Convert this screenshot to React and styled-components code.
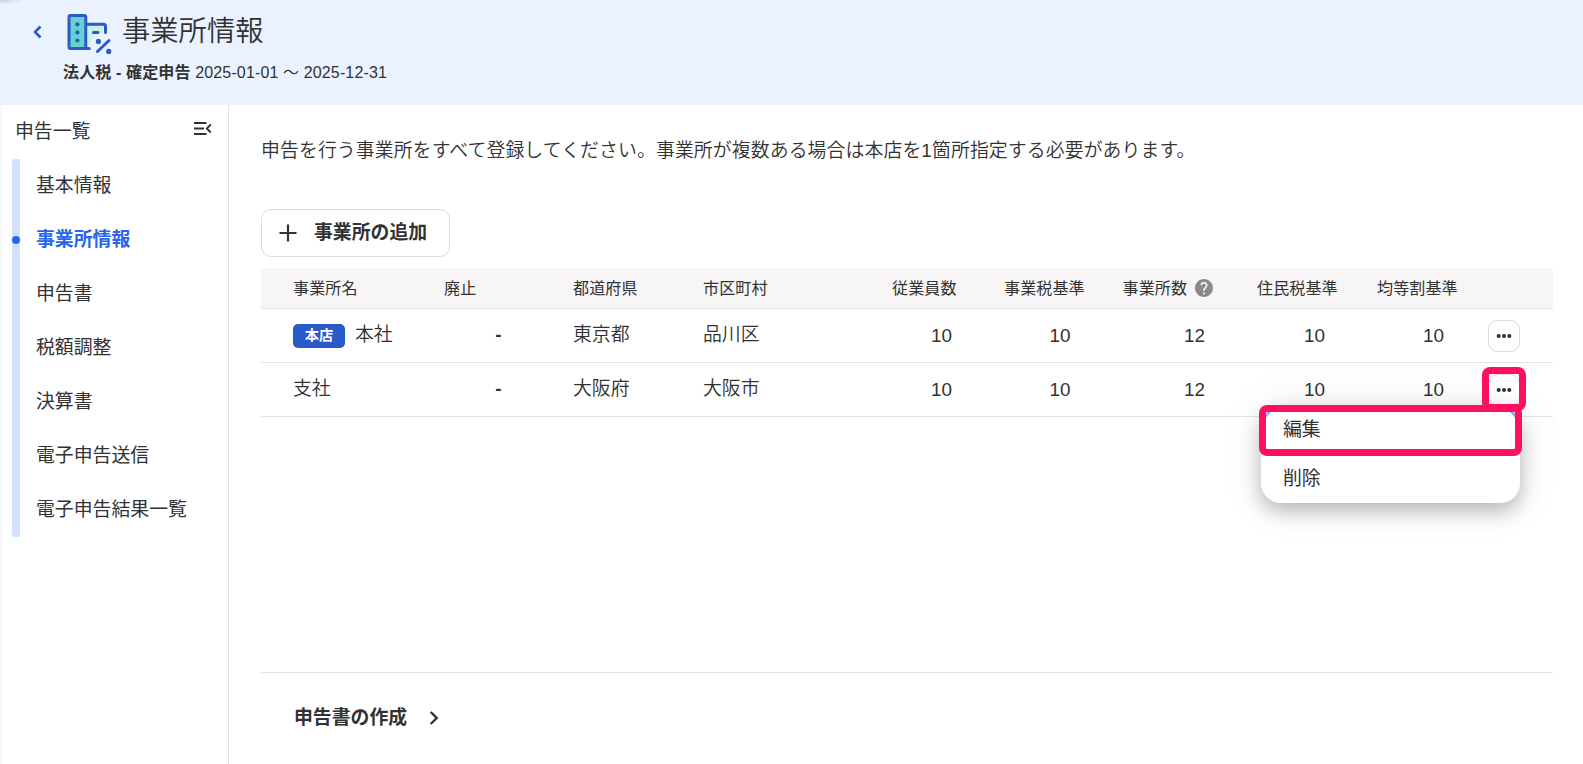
import React from 'react'
import styled, { createGlobalStyle } from 'styled-components'

const navItems = [
  '基本情報',
  '事業所情報',
  '申告書',
  '税額調整',
  '決算書',
  '電子申告送信',
  '電子申告結果一覧',
]

const offices = [
  { name: '本社', main: true, pref: '東京都', city: '品川区', counts: [10, 10, 12, 10, 10] },
  { name: '支社', main: false, pref: '大阪府', city: '大阪市', counts: [10, 10, 12, 10, 10] },
]

const LogoIcon = () => (
  <svg width="46" height="42" viewBox="0 0 46 42" fill="none">
    <path d="M21 12h15v8h-9l-5 12h-1z" fill="#c9f0ee" />
    <rect x="2" y="2.5" width="16.8" height="33" rx="1.8" fill="#66d1cf" stroke="#285ac8" strokeWidth="3" />
    <path d="M20 11.2h16.5a2 2 0 0 1 2 2v6.3M17 35.5h5.3M26.5 19.4h4.5" stroke="#285ac8" strokeWidth="3" strokeLinecap="round" />
    <path d="M30.5 38.5l11.5-11" stroke="#285ac8" strokeWidth="3" strokeLinecap="round" />
    <circle cx="10.4" cy="11.3" r="2.1" fill="#285ac8" />
    <circle cx="10.4" cy="19.4" r="2.1" fill="#285ac8" />
    <circle cx="10.4" cy="27.5" r="2.1" fill="#285ac8" />
    <circle cx="31.4" cy="28.4" r="2.6" fill="#285ac8" />
    <circle cx="41.7" cy="38.4" r="2.6" fill="#285ac8" />
  </svg>
)

const MoreIcon = () => (
  <svg width="16" height="6" viewBox="0 0 16 6" fill="#323232">
    <circle cx="2.7" cy="3" r="2" />
    <circle cx="8" cy="3" r="2" />
    <circle cx="13.3" cy="3" r="2" />
  </svg>
)

const App = () => {
  return (
    <>
      <GlobalStyle />
      <Page>
        <Header>
          <BackButton>
            <svg width="9" height="14" viewBox="0 0 9 14" fill="none">
              <path d="M7.5 1.5L2 7l5.5 5.5" stroke="#285ac8" strokeWidth="2.5" />
            </svg>
          </BackButton>
          <HeaderText>
            <TitleRow>
              <LogoIcon />
              <h1>事業所情報</h1>
            </TitleRow>
            <Period>
              <b>法人税 - 確定申告</b> 2025-01-01 ～ 2025-12-31
            </Period>
          </HeaderText>
        </Header>
        <Body>
          <Sidebar>
            <SidebarHead>
              申告一覧
              <svg width="18" height="13" viewBox="0 0 18 13" fill="none">
                <path d="M0 1h12.5M0 6.5h10M0 12h12.5M16.8 2.5l-4 4 4 4" stroke="#323232" strokeWidth="1.8" />
              </svg>
            </SidebarHead>
            <Nav>
              {navItems.map((item) => (
                <NavItem key={item} $active={item === '事業所情報'}>
                  <span>{item}</span>
                </NavItem>
              ))}
            </Nav>
          </Sidebar>
          <Main>
            <Lead>申告を行う事業所をすべて登録してください。事業所が複数ある場合は本店を1箇所指定する必要があります。</Lead>
            <AddButton>
              <svg width="18" height="18" viewBox="0 0 18 18">
                <path d="M9 .5v17M.5 9h17" stroke="#323232" strokeWidth="2.2" />
              </svg>
              <span>事業所の追加</span>
            </AddButton>
            <Table>
              <HeadRow>
                <span>事業所名</span>
                <span>廃止</span>
                <span>都道府県</span>
                <span>市区町村</span>
                <span>従業員数</span>
                <span>事業税基準</span>
                <HelpLabel>
                  事業所数
                  <svg width="18" height="18" viewBox="2 2 20 20">
                    <path
                      fill="#8c8989"
                      d="M12 2C6.48 2 2 6.48 2 12s4.48 10 10 10 10-4.48 10-10S17.52 2 12 2zm1 17h-2v-2h2v2zm2.07-7.75l-.9.92C13.45 12.9 13 13.5 13 15h-2v-.5c0-1.1.45-2.1 1.17-2.83l1.24-1.26c.37-.36.59-.86.59-1.41 0-1.1-.9-2-2-2s-2 .9-2 2H8c0-2.21 1.79-4 4-4s4 1.79 4 4c0 .88-.36 1.68-.93 2.25z"
                    />
                  </svg>
                </HelpLabel>
                <span>住民税基準</span>
                <span>均等割基準</span>
              </HeadRow>
              {offices.map((office) => (
                <Row key={office.name}>
                  <NameCell>
                    {office.main && <Badge>本店</Badge>}
                    <TextCell>{office.name}</TextCell>
                  </NameCell>
                  <DashCell>-</DashCell>
                  <TextCell>{office.pref}</TextCell>
                  <TextCell>{office.city}</TextCell>
                  {office.counts.map((n, i) => (
                    <NumCell key={i} $gap={i === 4 ? 44 : 52}>{n}</NumCell>
                  ))}
                  <MenuAnchor>
                    <MoreButton><MoreIcon /></MoreButton>
                    {!office.main && (
                      <>
                        <Menu>
                          <MenuItem $focused>編集</MenuItem>
                          <MenuItem>削除</MenuItem>
                        </Menu>
                        <ButtonMark />
                        <ItemMark />
                      </>
                    )}
                  </MenuAnchor>
                </Row>
              ))}
            </Table>
            <Footer>
              <span>申告書の作成</span>
              <svg width="10" height="16" viewBox="0 0 10 16" fill="none">
                <path d="M1.7 2l6 6-6 6" stroke="#323232" strokeWidth="2.4" />
              </svg>
            </Footer>
          </Main>
        </Body>
      </Page>
    </>
  )
}

export default App

const GlobalStyle = createGlobalStyle`
  * {
    box-sizing: border-box;
  }
  body {
    margin: 0;
    overflow: hidden;
    color: #323232;
    font-family: "Liberation Sans", "Noto Sans CJK JP", sans-serif;
    font-size: 18.88px;
  }
`;

const Page = styled.div`
  height: 764px;
  display: flex;
  flex-direction: column;
  background: #fff;
  box-shadow: inset 3px 0 3px -2px rgba(0, 0, 0, 0.06);
`;

const Header = styled.header`
  height: 105px;
  display: flex;
  background: radial-gradient(ellipse 24px 4px at 0 0, rgba(60, 70, 90, 0.2), transparent), #eaf2ff;
`;

const BackButton = styled.div`
  width: 63px;
  padding: 25px 0 0 33px;
  line-height: 0;
`;

const HeaderText = styled.div`
  padding-top: 13px;
`;

const TitleRow = styled.div`
  display: flex;
  height: 42px;
  padding-left: 4px;
  gap: 9px;
  h1 {
    margin: 0;
    font-size: 28.32px;
    font-weight: 350;
    line-height: 36px;
  }
`;

const Period = styled.div`
  margin-top: 5px;
  font-size: 16.05px;
  letter-spacing: 0.12px;
  line-height: 24px;
`;

const Body = styled.div`
  flex: 1;
  display: flex;
`;

const Sidebar = styled.aside`
  width: 229px;
  border-right: 1px solid #e4e2e2;
`;

const SidebarHead = styled.div`
  display: flex;
  justify-content: space-between;
  height: 54px;
  padding: 13px 16px 0 15px;
  line-height: 28px;
  svg {
    margin-top: 4px;
  }
`;

const Nav = styled.nav`
  width: 200px;
  margin-left: 12px;
  height: 378px;
  background: linear-gradient(#d3e2ff, #d3e2ff) left / 8px 100% no-repeat;
  border-radius: 4px;
`;

const NavItem = styled.div`
  display: flex;
  align-items: center;
  height: 54px;
  padding-left: ${(props) => (props.$active ? '0' : '24px')};
  color: ${(props) => (props.$active ? '#2864f0' : '#323232')};
  font-weight: ${(props) => (props.$active ? 700 : 400)};
  white-space: nowrap;
  span {
    padding-bottom: 5px;
  }
  &::before {
    content: "";
    display: ${(props) => (props.$active ? 'block' : 'none')};
    width: 8px;
    height: 8px;
    margin-right: 16px;
    border-radius: 50%;
    background: #2864f0;
  }
`;

const Main = styled.main`
  flex: 1;
  display: flex;
  flex-direction: column;
  padding: 32px 30px 0 32px;
`;

const Lead = styled.p`
  margin: 0 0 44px;
  font-weight: 350;
  letter-spacing: 0.1px;
  line-height: 28px;
`;

const AddButton = styled.button`
  display: flex;
  align-items: center;
  align-self: flex-start;
  gap: 17px;
  width: 189px;
  height: 48px;
  padding: 0 0 0 17px;
  border: 1px solid #dcdada;
  border-radius: 10px;
  background: #fff;
  color: #323232;
  font: inherit;
  font-weight: 700;
  white-space: nowrap;
  span {
    padding-bottom: 5px;
  }
`;

const Table = styled.div`
  margin-top: 11px;
`;

const Row = styled.div`
  display: grid;
  grid-template-columns: 151px 129px 130px 189px 112px 118.5px 134.5px 120px 111px 32px;
  align-items: center;
  height: 54px;
  padding-left: 32px;
  border-bottom: 1px solid #e4e2e2;
  white-space: nowrap;
`;

const HeadRow = styled(Row)`
  height: 41px;
  padding-bottom: 3px;
  background: #f7f5f6;
  font-size: 16.05px;
  letter-spacing: 0.1px;
`;

const HelpLabel = styled.span`
  display: flex;
  align-items: center;
  gap: 8px;
  svg {
    margin-top: 3px;
  }
`;

const NameCell = styled.span`
  display: flex;
  align-items: center;
  gap: 10px;
`;

const TextCell = styled.span`
  padding-bottom: 6px;
  font-weight: 350;
`;

const Badge = styled.span`
  width: 52px;
  height: 24px;
  border-radius: 5px;
  background: #285ac8;
  color: #fff;
  font-size: 14.2px;
  font-weight: 700;
  line-height: 22px;
  text-align: center;
`;

const NumCell = styled.span`
  padding-right: ${(props) => props.$gap}px;
  text-align: right;
`;

const DashCell = styled.span`
  padding: 0 71.5px 2px 0;
  font-weight: 700;
  text-align: right;
`;

const MenuAnchor = styled.div`
  position: relative;
`;

const MoreButton = styled.button`
  display: flex;
  align-items: center;
  justify-content: center;
  width: 32px;
  height: 32px;
  padding: 0;
  border: 1px solid #dcdada;
  border-radius: 10px;
  background: #fff;
`;

const Menu = styled.div`
  position: absolute;
  top: 31px;
  right: 0;
  width: 259px;
  border-radius: 24px 24px 20px 20px;
  background: #fff;
  box-shadow: 0 8px 20px rgba(0, 0, 0, 0.26), 0 0 48px rgba(0, 0, 0, 0.08);
`;

const MenuItem = styled.div`
  height: 49px;
  padding-left: 22px;
  border-radius: ${(props) => (props.$focused ? '24px 24px 0 0' : '0')};
  box-shadow: ${(props) => (props.$focused ? 'inset 0 0 0 2px #73a5ff' : 'none')};
  line-height: 49px;
`;

const ButtonMark = styled.div`
  position: absolute;
  top: -7px;
  left: -6px;
  width: 44px;
  height: 44px;
  border: 7px solid #ff0f5f;
  border-radius: 8px;
`;

const ItemMark = styled.div`
  position: absolute;
  top: 31px;
  right: -2px;
  width: 263px;
  height: 51px;
  border: 7px solid #ff0f5f;
  border-radius: 8px;
`;

const Footer = styled.div`
  display: flex;
  align-items: center;
  gap: 22px;
  height: 92px;
  margin-top: auto;
  padding: 0 0 2px 33px;
  border-top: 1px solid #e4e2e2;
  font-weight: 700;
  span {
    padding-bottom: 5px;
  }
`;
